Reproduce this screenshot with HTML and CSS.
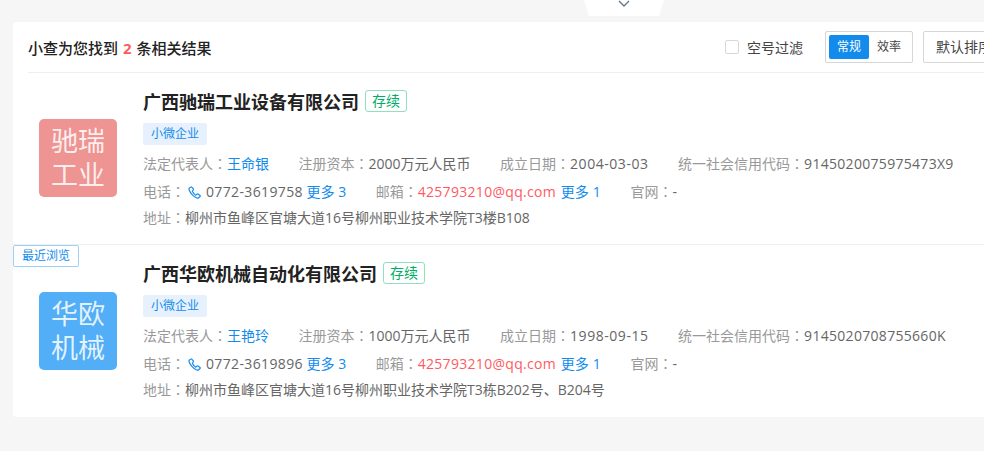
FILE: index.html
```html
<!DOCTYPE html>
<html lang="zh-CN">
<head>
  <meta charset="UTF-8" />
  <title>企业搜索结果</title>
  <link rel="stylesheet" href="styles.css">
</head>
<body>

  <div class="fold-tab">
    <svg class="fold-icon" width="12" height="7" viewBox="0 0 12 7"><path d="M1 1l5 5 5-5" fill="none" stroke="#667788" stroke-width="1.4"/></svg>
  </div>

  <div class="result-card">
    <div class="result-head">
      <div class="result-count">小查为您找到 <em>2</em> 条相关结果</div>
      <label class="filter-check"><span class="check-box"></span>空号过滤</label>
      <div class="mode-switch">
        <span class="mode-item mode-active">常规</span>
        <span class="mode-item">效率</span>
      </div>
      <div class="sort-button">默认排序</div>
    </div>

    <div class="company-row">
      <div class="company-logo logo-red">驰瑞<br>工业</div>
      <div class="company-info">
        <div class="company-title">
          <h3>广西驰瑞工业设备有限公司</h3>
          <span class="status-tag">存续</span>
        </div>
        <span class="scale-tag">小微企业</span>
        <div class="info-line">
          <span class="info-item">法定代表人：<a class="link">王命银</a></span>
          <span class="info-item">注册资本：<b>2000万元人民币</b></span>
          <span class="info-item">成立日期：<b class="num-date">2004-03-03</b></span>
          <span class="info-item">统一社会信用代码：<b class="num">9145020075975473X9</b></span>
        </div>
        <div class="info-line contact-line">
          <span class="info-item">电话：<svg class="phone-icon" width="13" height="13" viewBox="0 0 13 13"><path d="M2.6 1.100L1.200 2.200C.9 2.500.9 3.200 1.200 4c1 2.900 4.400 6.900 7.500 8 .9.300 1.500.200 1.900-.200l1.400-1.300c.3-.3.300-.7 0-1L10 8.100c-.3-.2-.7-.2-1 0l-.8.800c-.2.200-.5.200-.8 0C6.500 8.200 5 6.500 4.500 5.400c-.1-.3-.1-.6.100-.8l.7-.8c.2-.3.200-.6 0-.9L3.700 1.100c-.3-.3-.8-.3-1.100 0z" fill="none" stroke="#128bed" stroke-width="1.200"/></svg><b class="num-wide">0772-3619758</b> <a class="link">更多 3</a></span>
          <span class="info-item">邮箱：<span class="mail num">425793210@qq.com</span> <a class="link more">更多 1</a></span>
          <span class="info-item">官网：<b>-</b></span>
        </div>
        <div class="info-line address-line">
          <span class="info-item">地址：<b>柳州市鱼峰区官塘大道16号柳州职业技术学院T3楼B108</b></span>
        </div>
      </div>
    </div>

    <div class="company-row">
      <span class="recent-badge">最近浏览</span>
      <div class="company-logo logo-blue">华欧<br>机械</div>
      <div class="company-info">
        <div class="company-title">
          <h3>广西华欧机械自动化有限公司</h3>
          <span class="status-tag">存续</span>
        </div>
        <span class="scale-tag">小微企业</span>
        <div class="info-line">
          <span class="info-item">法定代表人：<a class="link">王艳玲</a></span>
          <span class="info-item">注册资本：<b>1000万元人民币</b></span>
          <span class="info-item">成立日期：<b class="num-date">1998-09-15</b></span>
          <span class="info-item">统一社会信用代码：<b class="num">9145020708755660K</b></span>
        </div>
        <div class="info-line contact-line">
          <span class="info-item">电话：<svg class="phone-icon" width="13" height="13" viewBox="0 0 13 13"><path d="M2.6 1.100L1.200 2.200C.9 2.500.9 3.200 1.200 4c1 2.900 4.400 6.900 7.500 8 .9.300 1.500.200 1.900-.200l1.400-1.300c.3-.3.300-.7 0-1L10 8.100c-.3-.2-.7-.2-1 0l-.8.800c-.2.200-.5.200-.8 0C6.500 8.200 5 6.500 4.500 5.400c-.1-.3-.1-.6.100-.8l.7-.8c.2-.3.200-.6 0-.9L3.700 1.100c-.3-.3-.8-.3-1.100 0z" fill="none" stroke="#128bed" stroke-width="1.200"/></svg><b class="num-wide">0772-3619896</b> <a class="link">更多 3</a></span>
          <span class="info-item">邮箱：<span class="mail num">425793210@qq.com</span> <a class="link more">更多 1</a></span>
          <span class="info-item">官网：<b>-</b></span>
        </div>
        <div class="info-line address-line">
          <span class="info-item">地址：<b>柳州市鱼峰区官塘大道16号柳州职业技术学院T3栋B202号、B204号</b></span>
        </div>
      </div>
    </div>
  </div>

</body>
</html>
```

FILE: styles.css
```css
html, body {
  height: 451px;
  overflow: hidden;
}
body {
  margin: 0;
  background-color: #f6f6f6;
  color: #333;
  font-family: "Open Sans", "Noto Sans CJK SC", sans-serif;
  font-size: 14px;
}
.fold-tab {
  width: 80px;
  height: 16px;
  margin-left: 584px;
  margin-bottom: 6px;
  background-color: #fff;
  clip-path: polygon(0 0, 100% 0, 94% 100%, 6% 100%);
  display: flex;
  justify-content: center;
}
.fold-icon {
  display: block;
}
.result-card {
  width: 1100px;
  margin-left: 13px;
  background-color: #fff;
  border-radius: 4px;
}
.result-head {
  height: 50px;
  margin-left: 15px;
  border-bottom: 1px solid #eee;
  display: flex;
  align-items: center;
}
.result-count {
  width: 697px;
  font-size: 15px;
  font-weight: 500;
  color: #222;
}
.result-count em {
  font-style: normal;
  font-weight: 700;
  color: #ff5a5f;
  margin: 0 1px;
}
.filter-check {
  width: 100px;
  display: flex;
  align-items: center;
  color: #444;
}
.check-box {
  width: 12px;
  height: 12px;
  margin-right: 8px;
  border: 1px solid #d8d8d8;
  border-radius: 2px;
}
.mode-switch {
  width: 80px;
  height: 24px;
  padding: 3px;
  border: 1px solid #d6d6d6;
  border-radius: 2px;
  display: flex;
  font-size: 12px;
}
.mode-item {
  width: 40px;
  line-height: 24px;
  text-align: center;
  color: #444;
}
.mode-active {
  background-color: #128bed;
  color: #fff;
  border-radius: 2px;
}
.sort-button {
  width: 120px;
  height: 30px;
  margin-left: 10px;
  padding-left: 12px;
  line-height: 30px;
  border: 1px solid #d6d6d6;
  border-radius: 2px;
  color: #444;
}
.company-row {
  position: relative;
  height: 171px;
  display: flex;
  align-items: center;
}
.company-row + .company-row {
  border-top: 1px solid #eee;
  height: 172px;
}
.recent-badge {
  position: absolute;
  left: 0;
  top: 0;
  width: 64px;
  height: 20px;
  line-height: 20px;
  text-align: center;
  background-color: #fff;
  border: 1px solid #9fd0f7;
  border-radius: 2px;
  font-size: 12px;
  color: #128bed;
}
.company-logo {
  width: 78px;
  height: 78px;
  margin-left: 26px;
  margin-bottom: 1px;
  border-radius: 5px;
  text-align: center;
  font-size: 27px;
  line-height: 34px;
  padding-top: 5px;
  box-sizing: border-box;
  color: rgba(255, 255, 255, 0.85);
}
.logo-red {
  background-color: #ee9492;
}
.logo-blue {
  background-color: #52aef7;
}
.company-info {
  margin-left: 26px;
  padding-top: 3px;
}
.company-title {
  display: flex;
  align-items: center;
  height: 24px;
  margin-bottom: 10px;
}
.company-title h3 {
  margin: 0;
  font-size: 18px;
  font-weight: 700;
  color: #222;
}
.status-tag {
  margin-left: 6px;
  width: 40px;
  height: 20px;
  line-height: 20px;
  text-align: center;
  background-color: #fff;
  border: 1px solid #8fe0bf;
  border-radius: 3px;
  color: #00ad65;
}
.scale-tag {
  display: block;
  width: 64px;
  height: 22px;
  line-height: 22px;
  text-align: center;
  background-color: #e7f1fd;
  border-radius: 2px;
  font-size: 12px;
  color: #128bed;
}
.info-line {
  display: flex;
  height: 26px;
  line-height: 26px;
  white-space: nowrap;
  color: #999;
}
.scale-tag + .info-line {
  margin-top: 6px;
}
.contact-line {
  height: 28px;
  line-height: 28px;
  margin-top: 1px;
}
.address-line {
  line-height: 24px;
}
/* the TC face has the colon centred in its box, like the labels here */
.info-item {
  margin-right: 29.5px;
  font-family: "Open Sans", "Noto Sans CJK TC", sans-serif;
  font-feature-settings: "locl" 0;
}
.info-item b, .link, .mail {
  font-family: "Open Sans", "Noto Sans CJK SC", sans-serif;
  font-feature-settings: normal;
}
.info-item b {
  font-weight: 400;
  color: #666;
}
.num {
  letter-spacing: 0.3px;
}
.num-wide {
  letter-spacing: 0.36px;
}
.num-date {
  letter-spacing: 0.55px;
}
.more {
  margin-left: 1px;
  letter-spacing: 0.2px;
}
.link {
  color: #128bed;
}
.info-item .mail {
  color: #ff5a5f;
}
.phone-icon {
  margin: 0 5px 0 3px;
  vertical-align: -2px;
}
```
